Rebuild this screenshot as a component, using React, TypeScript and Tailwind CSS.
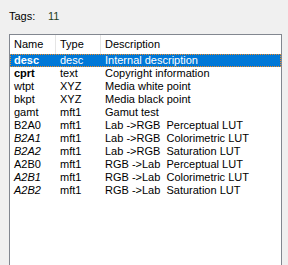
import React from "react";

type Tag = { sig: string; type: string; desc: string; bold?: boolean; italic?: boolean };

const TAGS: Tag[] = [
  { sig: "desc", type: "desc", desc: "Internal description", bold: true },
  { sig: "cprt", type: "text", desc: "Copyright information", bold: true },
  { sig: "wtpt", type: "XYZ", desc: "Media white point" },
  { sig: "bkpt", type: "XYZ", desc: "Media black point" },
  { sig: "gamt", type: "mft1", desc: "Gamut test" },
  { sig: "B2A0", type: "mft1", desc: "Lab ->RGB  Perceptual LUT" },
  { sig: "B2A1", type: "mft1", desc: "Lab ->RGB  Colorimetric LUT", italic: true },
  { sig: "B2A2", type: "mft1", desc: "Lab ->RGB  Saturation LUT", italic: true },
  { sig: "A2B0", type: "mft1", desc: "RGB ->Lab  Perceptual LUT" },
  { sig: "A2B1", type: "mft1", desc: "RGB ->Lab  Colorimetric LUT", italic: true },
  { sig: "A2B2", type: "mft1", desc: "RGB ->Lab  Saturation LUT", italic: true },
];

export default function App() {
  return (
    <div
      className="w-[288px] h-[265px] bg-[#f0f0f0] overflow-hidden text-[11px] text-black"
      style={{ fontFamily: '"Liberation Sans", Arial, sans-serif' }}
    >
      <div className="flex items-center h-[14px] mt-[9px] pl-[9px]">
        <span className="w-[39px]">Tags:</span>
        <span className="text-[#1f3f1f]">{TAGS.length}</span>
      </div>

      <div className="ml-[9px] mt-[11px] w-[273px] h-[240px] border border-[#828790] bg-white">
        <div className="flex h-[19px] items-center">
          <div className="w-[46px] h-full flex items-center pl-[4px] border-r border-[#e5e5e5]">Name</div>
          <div className="w-[45px] h-full flex items-center pl-[4px] border-r border-[#e5e5e5]">Type</div>
          <div className="flex-1 h-full flex items-center pl-[4px]">Description</div>
        </div>
        {TAGS.map((t, i) => {
          const sel = i === 0;
          return (
            <div
              key={t.sig}
              className={`flex h-[13px] items-center leading-[13px] whitespace-pre ${
                sel ? "bg-[#0078d7] text-white outline-1 outline-dotted outline-[#f08a24] -outline-offset-1" : ""
              }`}
            >
              <div className={`w-[46px] pl-[4px] ${t.bold ? "font-bold" : ""} ${t.italic ? "italic" : ""}`}>{t.sig}</div>
              <div className="w-[45px] pl-[4px]">{t.type}</div>
              <div className="flex-1 pl-[4px]">{t.desc}</div>
            </div>
          );
        })}
      </div>
    </div>
  );
}
